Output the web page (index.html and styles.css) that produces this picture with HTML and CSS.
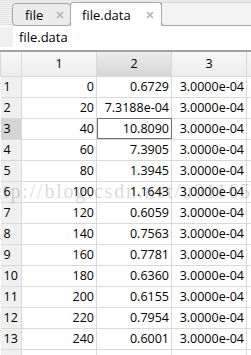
FILE: index.html
```html
<!DOCTYPE html>
<html lang="en">
<head>
  <meta charset="UTF-8">
  <meta name="viewport" content="width=device-width, initial-scale=1.0">
  <title>file.data</title>
  <link rel="stylesheet" href="styles.css">
</head>
<body>
  <div class="window">
    <div class="tabbar">
      <div class="grip"></div>
      <div class="tab">
        <span class="tab-label">file</span>
        <svg class="close" width="8" height="8" viewBox="0 0 8 8"><path d="M1 1L7 7M7 1L1 7"/></svg>
      </div>
      <div class="tab active">
        <span class="tab-label">file.data</span>
        <svg class="close" width="8" height="8" viewBox="0 0 8 8"><path d="M1 1L7 7M7 1L1 7"/></svg>
      </div>
      <div class="tab-fill"></div>
    </div>

    <div class="titlebar">
      <div class="title-box"></div>
      <span class="title">file.data</span>
    </div>

    <div class="grid-wrap">
      <table class="grid">
        <colgroup>
          <col class="col-row">
          <col class="col-data">
          <col class="col-data">
          <col class="col-data">
          <col class="col-rest">
        </colgroup>
        <thead>
          <tr>
            <th class="corner"></th>
            <th>1</th>
            <th class="sel">2</th>
            <th>3</th>
            <th></th>
          </tr>
        </thead>
        <tbody>
          <tr><th>1</th><td>0</td><td>0.6729</td><td>3.0000e-04</td><td></td></tr>
          <tr><th>2</th><td>20</td><td>7.3188e-04</td><td>3.0000e-04</td><td></td></tr>
          <tr><th class="sel">3</th><td>40</td><td class="current">10.8090</td><td>3.0000e-04</td><td></td></tr>
          <tr><th>4</th><td>60</td><td>7.3905</td><td>3.0000e-04</td><td></td></tr>
          <tr><th>5</th><td>80</td><td>1.3945</td><td>3.0000e-04</td><td></td></tr>
          <tr><th>6</th><td>100</td><td>1.1643</td><td>3.0000e-04</td><td></td></tr>
          <tr><th>7</th><td>120</td><td>0.6059</td><td>3.0000e-04</td><td></td></tr>
          <tr><th>8</th><td>140</td><td>0.7563</td><td>3.0000e-04</td><td></td></tr>
          <tr><th>9</th><td>160</td><td>0.7781</td><td>3.0000e-04</td><td></td></tr>
          <tr><th>10</th><td>180</td><td>0.6360</td><td>3.0000e-04</td><td></td></tr>
          <tr><th>11</th><td>200</td><td>0.6155</td><td>3.0000e-04</td><td></td></tr>
          <tr><th>12</th><td>220</td><td>0.7954</td><td>3.0000e-04</td><td></td></tr>
          <tr><th>13</th><td>240</td><td>0.6001</td><td>3.0000e-04</td><td></td></tr>
          <tr><th></th><td></td><td></td><td></td><td></td></tr>
        </tbody>
      </table>
      <div class="watermark">http://blog.csdn.net/u011650</div>
    </div>
  </div>
</body>
</html>
```

FILE: styles.css
```css
/* Reset and Base Styles */
* {
  margin: 0;
  padding: 0;
  box-sizing: border-box;
}

body {
  font-family: 'Open Sans', 'Noto Sans', sans-serif;
  background: #fff;
  color: #000;
  width: 251px;
  height: 355px;
  overflow: hidden;
}

.window {
  width: 251px;
  height: 355px;
  overflow: hidden;
}

/* Tab bar */
.tabbar {
  display: flex;
  align-items: flex-end;
  height: 26px;
  background: #e9e9e9;
}

.grip {
  width: 12px;
  height: 26px;
  background: repeating-linear-gradient(180deg, #e4e4e4 0 1px, #f4f4f4 1px 2px);
}

.tab {
  display: flex;
  align-items: center;
  justify-content: space-between;
  height: 23px;
  width: 59px;
  padding: 0 6px 0 12px;
  border: 1px solid #a7a7a7;
  border-radius: 4px;
  background: #ececec;
  font-size: 13px;
}

.tab.active {
  width: 92px;
  height: 24px;
  margin-left: -1px;
  padding: 0 7px 0 11px;
  border-bottom: none;
  border-radius: 4px 4px 0 0;
  background: #fff;
  position: relative;
  z-index: 1;
}

.tab-label {
  line-height: 20px;
}

.close {
  stroke: #b4b4b4;
  stroke-width: 1.7;
}

.tab-fill {
  flex: 1;
  height: 24px;
  margin-left: -1px;
  background: #f3f3f3;
  border-top: 1px solid #d6d6d6;
  border-left: 1px solid #a7a7a7;
  border-bottom: 1px solid #a7a7a7;
  border-bottom-left-radius: 4px;
}

/* Title row */
.titlebar {
  display: flex;
  align-items: center;
  height: 26px;
  padding-bottom: 2px;
  border-bottom: 2px solid #a3a3a3;
}

.title-box {
  width: 13px;
  height: 20px;
  background: #f0f0f0;
}

.title {
  margin-left: 6px;
  font-size: 13px;
}

/* Grid */
.grid-wrap {
  position: relative;
}

.grid {
  border-collapse: collapse;
  table-layout: fixed;
  width: 260px;
  font-size: 12.5px;
}

.col-row {
  width: 21px;
}

.col-data {
  width: 75px;
}

.col-rest {
  width: 14px;
}

.grid tbody tr {
  height: 21px;
}

.grid thead tr {
  height: 24px;
}

.grid th,
.grid td {
  border: 1px solid #d9d9d9;
  padding: 0 2px 0 0;
  white-space: nowrap;
  overflow: hidden;
}

.grid td {
  text-align: right;
}

.grid thead th {
  border-top: none;
  font-weight: normal;
  text-align: center;
  padding: 0;
  background: linear-gradient(#f7f7f7, #ededed);
}

.grid thead th.sel {
  background: linear-gradient(#ececec, #d6d6d6);
}

.grid tbody th {
  border-left: none;
  font-weight: normal;
  text-align: left;
  padding-left: 3px;
  background: #f0f0f0;
}

.grid tbody th.sel {
  background: #d4d4d4;
}

.grid td.current {
  outline: 1px solid #6f6f6f;
  outline-offset: -1px;
}

/* Watermark */
.watermark {
  position: absolute;
  left: -16px;
  top: 128px;
  font-family: 'Liberation Serif', serif;
  font-size: 20px;
  letter-spacing: 1.8px;
  color: rgba(0, 0, 0, 0.17);
  white-space: nowrap;
  pointer-events: none;
}
```
